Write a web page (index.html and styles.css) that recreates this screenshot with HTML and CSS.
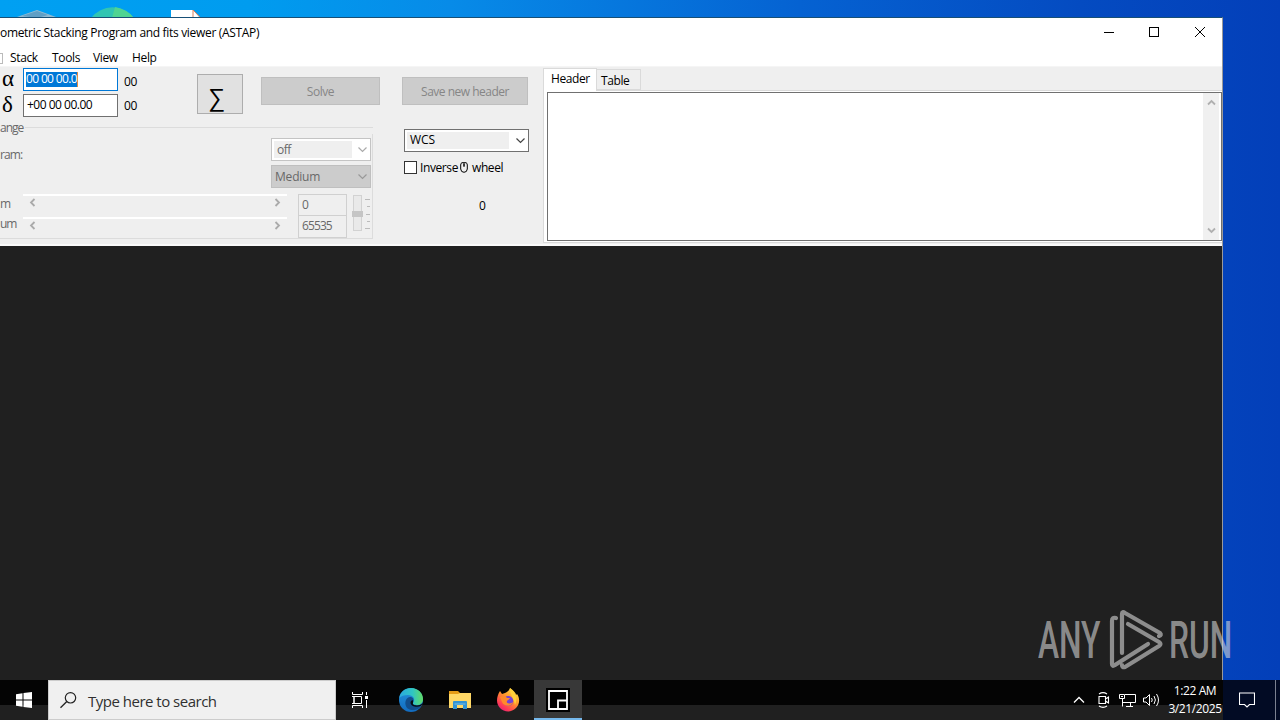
FILE: index.html
```html
<!DOCTYPE html>
<html lang="en">
<head>
    <meta charset="UTF-8">
    <meta name="viewport" content="width=device-width, initial-scale=1.0">
    <title>ASTAP</title>
    <link rel="stylesheet" href="styles.css">
</head>
<body>
    <div class="desktop">
        <!-- desktop icons peeking out above the window -->
        <svg class="desktop-icons" width="220" height="18" viewBox="0 0 220 18">
            <path d="M17 17 L37 10 L56 17 Z" fill="#8fb9d0"/>
            <path d="M22 16 L37 11 L48 15 L37 18 Z" fill="#5f9fc6"/>
            <path d="M91 18 A27 27 0 0 1 134 18 Z" fill="#31c5b2"/>
            <path d="M115 7 Q127 9 134 18 L112 18 Z" fill="#4fd492"/>
            <path d="M171 10 H193 L200 18 H171 Z" fill="#fff"/>
            <path d="M193 10 V18 M193 10 L200 17" stroke="#d9805c" fill="none"/>
        </svg>

        <div class="window">
            <div class="title-bar">
                <span class="title">ometric Stacking Program and fits viewer (ASTAP)</span>
                <div class="window-buttons">
                    <svg width="46" height="30" viewBox="0 0 46 30"><path d="M20 14.5 H30" stroke="#000"/></svg>
                    <svg width="46" height="30" viewBox="0 0 46 30"><rect x="19.5" y="9.5" width="9" height="9" fill="none" stroke="#000"/></svg>
                    <svg width="46" height="30" viewBox="0 0 46 30"><path d="M19 9 L29 19 M29 9 L19 19" stroke="#000"/></svg>
                </div>
            </div>
            <div class="menu-bar">
                <span class="menu-stub"></span>
                <span class="menu-stack">Stack</span>
                <span class="menu-tools">Tools</span>
                <span class="menu-view">View</span>
                <span class="menu-help">Help</span>
            </div>

            <div class="toolbar">
                <div class="left-panel">
                    <div class="position-row">
                        <div class="coords">
                            <span class="greek">α</span>
                            <div class="field field-focus"><span class="selected">00 00 00.0</span></div>
                            <span class="seconds">00</span>
                            <span class="greek">δ</span>
                            <div class="field"><span class="declination">+00 00 00.00</span></div>
                            <span class="seconds seconds-dec">00</span>
                        </div>
                        <div class="sigma-button">∑</div>
                        <div class="button solve"><span>Solve</span></div>
                    </div>

                    <div class="range-group">
                        <div class="legend"><span>ange</span></div>
                        <div class="histogram-row">
                            <span class="histogram-label">ram:</span>
                            <div class="selects">
                                <div class="select select-off">
                                    <span class="select-text">off</span>
                                    <svg width="11" height="7" viewBox="0 0 11 7"><path d="M1.5 1.5 L5.5 5.5 L9.5 1.5" fill="none" stroke="#aaa" stroke-width="1.2"/></svg>
                                </div>
                                <div class="select select-medium">
                                    <span class="select-text">Medium</span>
                                    <svg width="11" height="7" viewBox="0 0 11 7"><path d="M1.5 1.5 L5.5 5.5 L9.5 1.5" fill="none" stroke="#999" stroke-width="1.2"/></svg>
                                </div>
                            </div>
                        </div>
                        <div class="levels">
                            <div class="sliders">
                                <div class="slider-row">
                                    <span class="label-min">m</span>
                                    <div class="slider">
                                        <svg width="7" height="9" viewBox="0 0 7 9"><path d="M5.5 1 L2 4.5 L5.5 8" fill="none" stroke="#aaa" stroke-width="1.8"/></svg>
                                        <svg width="7" height="9" viewBox="0 0 7 9"><path d="M1.5 1 L5 4.5 L1.5 8" fill="none" stroke="#aaa" stroke-width="1.8"/></svg>
                                    </div>
                                </div>
                                <div class="slider-row">
                                    <span class="label-max">um</span>
                                    <div class="slider">
                                        <svg width="7" height="9" viewBox="0 0 7 9"><path d="M5.5 1 L2 4.5 L5.5 8" fill="none" stroke="#aaa" stroke-width="1.8"/></svg>
                                        <svg width="7" height="9" viewBox="0 0 7 9"><path d="M1.5 1 L5 4.5 L1.5 8" fill="none" stroke="#aaa" stroke-width="1.8"/></svg>
                                    </div>
                                </div>
                            </div>
                            <div class="level-values">
                                <div class="value">0</div>
                                <div class="value value-max">65535</div>
                            </div>
                            <svg class="trackbar" width="22" height="40" viewBox="0 0 22 40">
                                <rect x="2.5" y="1.5" width="8" height="35" fill="#e9e9e9" stroke="#d2d2d2"/>
                                <rect x="1" y="17" width="11" height="6" fill="#c5c5c5"/>
                                <path d="M14 5.5 H19 M16 12.5 H19 M15 20.5 H19 M16 27.5 H19 M14 34.5 H19" stroke="#bbb"/>
                            </svg>
                        </div>
                    </div>
                </div>

                <div class="middle-panel">
                    <div class="button save"><span>Save new header</span></div>
                    <div class="select select-wcs">
                        <span class="select-text">WCS</span>
                        <svg width="11" height="7" viewBox="0 0 11 7"><path d="M1.5 1.5 L5.5 5.5 L9.5 1.5" fill="none" stroke="#444" stroke-width="1.2"/></svg>
                    </div>
                    <div class="inverse">
                        <span class="checkbox"></span>
                        <span class="inverse-text">Inverse</span>
                        <svg width="8" height="11" viewBox="0 0 8 11"><path d="M2 .7 H6 Q7.3 1 7.3 3 V7 Q7 10.3 4 10.3 Q1 10.3 .7 7 V3 Q.7 1 2 .7 Z M4 1 V5 M3 3 H5" fill="none" stroke="#000"/></svg>
                        <span class="wheel-text">wheel</span>
                    </div>
                    <div class="counter">0</div>
                </div>

                <div class="notebook">
                    <div class="tabs">
                        <div class="tab tab-active"><span class="tab-header">Header</span></div>
                        <div class="tab"><span class="tab-table">Table</span></div>
                    </div>
                    <div class="page">
                        <div class="memo">
                            <div class="scrollbar">
                                <svg width="9" height="7" viewBox="0 0 9 7"><path d="M1 5.5 L4.5 2 L8 5.5" fill="none" stroke="#b0b0b0" stroke-width="1.8"/></svg>
                                <svg width="9" height="7" viewBox="0 0 9 7"><path d="M1 1.5 L4.5 5 L8 1.5" fill="none" stroke="#b0b0b0" stroke-width="1.8"/></svg>
                            </div>
                        </div>
                    </div>
                </div>
            </div>
            <div class="viewer"></div>
        </div>

        <div class="watermark">
            <span class="mark-any">ANY</span>
            <svg width="56" height="64" viewBox="0 0 56 64">
                <path d="M8 9 Q4 8 4 12 V55 Q4 58 7 56 L40 35 M14 44 V5 Q14 2 17 4 L52 24 Q54 26 51 27 M20 15 L51 33 Q54 35 51 37 L17 58 Q14 59 14 56" fill="none" stroke="currentColor" stroke-width="4.2" stroke-linejoin="round" stroke-linecap="round"/>
            </svg>
            <span class="mark-run">RUN</span>
        </div>

        <div class="taskbar">
            <div class="start">
                <svg width="16" height="16" viewBox="0 0 16 16"><path d="M0 2.2 L6.5 1.3 V7.5 H0 Z M7.5 1.1 L16 0 V7.5 H7.5 Z M0 8.5 H6.5 V14.7 L0 13.8 Z M7.5 8.5 H16 V16 L7.5 14.9 Z" fill="#fff"/></svg>
            </div>
            <div class="search">
                <svg width="18" height="18" viewBox="0 0 18 18"><circle cx="10.5" cy="6.8" r="5.2" fill="none" stroke="#222" stroke-width="1.2"/><path d="M6.8 10.5 L.5 16.8" stroke="#222" stroke-width="1.3"/></svg>
                <span>Type here to search</span>
            </div>
            <div class="apps">
                <div class="app app-taskview">
                    <svg width="18" height="16" viewBox="0 0 18 16"><path d="M1.5 0 V2.5 H11.5 V0 M3 4.5 H10.5 V11.5 H3 Z M1.5 16 V13.5 H11.5 V16 M15.5 0 V3 M15.5 8 V16" fill="none" stroke="#fff"/><path d="M1 4.5 H3 V11.5 H1" fill="none" stroke="#fff"/><rect x="14" y="4" width="3" height="3" fill="#fff"/></svg>
                </div>
                <div class="app app-edge">
                    <svg width="24" height="24" viewBox="0 0 24 24">
                        <defs>
                            <linearGradient id="edge-top" x1="0" x2="1"><stop offset="0" stop-color="#2aa8e0"/><stop offset=".55" stop-color="#2fc5c4"/><stop offset="1" stop-color="#62dc65"/></linearGradient>
                            <linearGradient id="edge-base" x1="0" y1="0" x2="0" y2="1"><stop offset="0" stop-color="#2493dd"/><stop offset="1" stop-color="#126bbf"/></linearGradient>
                        </defs>
                        <circle cx="12" cy="12" r="12" fill="url(#edge-base)"/>
                        <path d="M.2 10 C1 4 6 0 12 0 C19 0 24 5 24 11 C24 15 21 17 18 17 C15 17 13.5 16 14 15 C17 11 14 7 9 7 C5 7 2 8 .2 10 Z" fill="url(#edge-top)"/>
                        <path d="M8 20 C4 14 8 8 12 9 C15 10 15 13 13.8 15 C14 18 19 19 23 16 C22 18 21 20 19 21 C15 23 10 22 8 20 Z" fill="#124e8c"/>
                        <path d="M14 15 C13 17 17 18 21 17 L24 15 L22 18 C17 20 12 18 11.5 15 C11.5 13 13 12 14 12.5 Z" fill="#080d12"/>
                    </svg>
                </div>
                <div class="app app-explorer">
                    <svg width="22" height="20" viewBox="0 0 22 20">
                        <path d="M0 1 H9 L11 3 H21 V7 H0 Z" fill="#e59c17"/>
                        <path d="M0 4 H9 L11 3 H22 V18 H0 Z" fill="#ffd866"/>
                        <path d="M4 19 V12 Q4 11 5 11 H17 Q18 11 18 12 V19 H14 V15 H8 V19 Z" fill="#3294d4"/>
                        <path d="M5.5 14 H16.5" stroke="#79bde3"/>
                    </svg>
                </div>
                <div class="app app-firefox">
                    <svg width="24" height="24" viewBox="0 0 24 24">
                        <defs><linearGradient id="fox" x1=".9" y1="0" x2=".2" y2="1"><stop offset="0" stop-color="#fff04a"/><stop offset=".45" stop-color="#ff982b"/><stop offset=".8" stop-color="#ff3d55"/><stop offset="1" stop-color="#e41b79"/></linearGradient></defs>
                        <path d="M4 3 L6 6 L9 5 C11 4 13 3 14 0 C18 3 20 5 20 7 L21 6 C24 10 24 16 20 20 C15 25 8 24 4 20 C0 16 0 9 4 3 Z" fill="url(#fox)"/>
                        <circle cx="12.3" cy="13" r="5" fill="#7442d5"/>
                        <path d="M4 9 C7 7 10 8 11 10 L14 10 C13 12 11 12 11 13 C10 15 13 17 17 14 C16 19 8 19 6 14 Z" fill="#ff8a2b"/>
                        <path d="M14 0 C20 5 22 10 19 17 C18 10 14 7 14 0 Z" fill="#ffcf3a"/>
                    </svg>
                </div>
                <div class="app app-active">
                    <svg width="24" height="24" viewBox="0 0 24 24"><rect width="24" height="24" fill="#000"/><path d="M3 3 H21 V21 H3 Z M12 21 V12.5 H21" fill="none" stroke="#fff" stroke-width="1.8"/></svg>
                </div>
            </div>
            <div class="tray">
                <svg class="tray-chevron" width="12" height="8" viewBox="0 0 12 8"><path d="M1 6.5 L6 1.5 L11 6.5" fill="none" stroke="#fff" stroke-width="1.3"/></svg>
                <svg class="tray-meet" width="13" height="16" viewBox="0 0 13 16"><path d="M2 2 Q6 -.7 10 2 M2 14 Q6 16.7 10 14 M2 4.5 H8.5 V11.5 H2 Z M8.5 7 L11.5 5 V11 L8.5 9" fill="none" stroke="#fff" stroke-width="1.1"/></svg>
                <svg class="tray-network" width="17" height="14" viewBox="0 0 17 14"><path d="M6 1.5 H16.5 V9.5 H4 M11.5 10 V13 M7 13.5 H14 M3.5 5 V13.5 M.5 1.5 H5.5 V5.5 H.5 Z" fill="none" stroke="#fff"/><path d="M2 3.5 H4" stroke="#fff"/></svg>
                <svg class="tray-volume" width="17" height="14" viewBox="0 0 17 14"><path d="M.5 5 H3 L6.5 1.5 V12.5 L3 9 H.5 Z M8.5 5 Q10 7 8.5 9 M11 3 Q13.8 7 11 11 M13.5 1 Q17.5 7 13.5 13" fill="none" stroke="#fff"/></svg>
                <div class="clock"><span class="time">1:22 AM</span><span class="date">3/21/2025</span></div>
                <div class="notifications">
                    <svg width="16" height="16" viewBox="0 0 16 16"><path d="M.5 1 H15.5 V12.5 H10.5 L8 15 L5.5 12.5 H.5 Z" fill="none" stroke="#fff" stroke-width="1.1"/></svg>
                </div>
            </div>
        </div>
    </div>
</body>
</html>
```
FILE: styles.css
```css
* {
    box-sizing: border-box;
}

body {
    margin: 0;
    font-family: "Open Sans", "Noto Sans", sans-serif;
    font-size: 12px;
    line-height: 14px;
    letter-spacing: -.45px;
    color: #000;
}

svg {
    display: block;
    flex: none;
}

span {
    white-space: nowrap;
}

.desktop {
    position: relative;
    width: 1280px;
    height: 720px;
    overflow: hidden;
    background: linear-gradient(90deg, #00a0f2 0, #009cef 250px, #078be8 450px, #0562d2 800px, #044bc1 1080px, #033fb9 1280px);
}

.desktop-icons {
    position: absolute;
    left: 0;
    top: 0;
}

/* Application window */
.window {
    position: absolute;
    left: 0;
    top: 17px;
    width: 1223px;
    height: 703px;
    display: flex;
    flex-direction: column;
    border-top: 1px solid #174f76;
    border-right: 1px solid #999;
    background: #efefef;
    overflow: hidden;
}

.title-bar {
    display: flex;
    justify-content: space-between;
    height: 30px;
    background: #fff;
}

.title {
    padding-top: 8px;
    letter-spacing: -.32px;
}

.window-buttons {
    display: flex;
}

.menu-bar {
    display: flex;
    align-items: flex-start;
    height: 18px;
    padding-top: 3px;
    background: #fff;
    letter-spacing: -.35px;
}

.menu-bar span {
    flex: none;
}

.menu-stub {
    width: 3px;
    height: 11px;
    margin-top: 2px;
    border: 1px solid #bbb;
    border-left: 0;
}

.menu-bar .menu-stack {
    width: 42px;
    margin-left: 7px;
}

.menu-tools {
    width: 41px;
}

.menu-view {
    width: 39px;
}

/* Toolbar */
.toolbar {
    display: flex;
    height: 180px;
    border-top: 1px solid #f5f5f5;
    border-bottom: 2px solid #fafafa;
}

.left-panel {
    width: 390px;
    flex: none;
}

.position-row {
    display: flex;
    align-items: flex-start;
    height: 54px;
}

.coords {
    display: grid;
    grid-template-columns: 23px 95px 1fr;
    grid-template-rows: 23px 23px;
    row-gap: 3px;
    width: 197px;
    padding-top: 1px;
}

.greek {
    padding-left: 2px;
    font-family: "Liberation Serif", serif;
    font-size: 23px;
    line-height: 21px;
}

.field {
    display: flex;
    align-items: flex-start;
    padding: 3px 2px;
    border: 1px solid #707070;
    background: #fff;
    letter-spacing: -.65px;
}

.field-focus {
    border-color: #0078d7;
}

.selected {
    height: 15px;
    background: #0078d7;
    border-right: 1px solid #e58b3d;
    color: #fff;
}

.declination {
    padding-left: 1px;
    letter-spacing: -.5px;
}

.seconds {
    padding: 7px 0 0 6px;
}

.seconds-dec {
    padding-top: 5px;
}

.sigma-button {
    width: 46px;
    height: 40px;
    margin-top: 7px;
    padding-left: 11px;
    border: 1px solid #adadad;
    background: #e1e1e1;
    font-size: 24px;
    line-height: 43px;
}

.button {
    display: flex;
    justify-content: center;
    align-items: center;
    height: 28px;
    padding-top: 1px;
    border: 1px solid #bfbfbf;
    background: #ccc;
    color: #868686;
    letter-spacing: -.45px;
}

.solve {
    width: 119px;
    margin: 10px 0 0 18px;
}

.range-group {
    width: 373px;
    height: 118px;
    border-right: 1px solid #dcdcdc;
    border-bottom: 1px solid #dcdcdc;
    background: #efefef;
    color: #686868;
}

.legend {
    display: flex;
    align-items: center;
    width: 373px;
    height: 13px;
    gap: 2px;
    background: #efefef;
    letter-spacing: -1px;
}

.legend span {
    padding-top: 1px;
}

.legend::after {
    content: "";
    flex: 1;
    height: 1px;
    background: #dcdcdc;
}

.histogram-row {
    display: flex;
    justify-content: space-between;
    height: 60px;
    padding: 4px 1px 0 0;
}

.histogram-label {
    padding-top: 10px;
    letter-spacing: -.9px;
}

.selects {
    display: grid;
    gap: 4px;
    align-content: start;
}

.select {
    display: flex;
    align-items: center;
    justify-content: space-between;
    height: 23px;
    padding: 0 2px;
    border: 1px solid #c4c4c4;
    background: #fff;
}

.select .select-text {
    width: 78px;
    height: 17px;
    padding: 1px 0 0 3px;
    background: #efefef;
}

.select-off {
    width: 100px;
}

.select-off .select-text {
    padding-top: 2px;
}

.select-medium {
    background: #ccc;
    padding-left: 0;
    border-color: #bfbfbf;
    letter-spacing: -.2px;
}

.select-medium .select-text {
    background: none;
    padding-top: 2px;
}

.levels {
    display: flex;
    height: 44px;
}

.sliders {
    width: 298px;
    flex: none;
}

.slider-row {
    display: flex;
    height: 23px;
}

.label-min,
.label-max {
    width: 23px;
    flex: none;
    padding-top: 3px;
}

.label-max {
    padding-top: 0;
    letter-spacing: -1.2px;
}

.slider {
    display: flex;
    align-items: flex-start;
    justify-content: space-between;
    width: 264px;
    height: 22px;
    padding: 2px 6px;
    border-top: 2px solid #fff;
}

.level-values {
    width: 49px;
    flex: none;
}

.value {
    height: 22px;
    padding: 3px;
    border: 1px solid #d0d0d0;
    letter-spacing: -.9px;
}

.value-max {
    border-top: 0;
}

.trackbar {
    margin-left: 4px;
}

.middle-panel {
    width: 153px;
    flex: none;
    padding: 10px 0 0 12px;
}

.save {
    width: 126px;
    letter-spacing: -.5px;
}

.select-wcs {
    width: 125px;
    margin: 24px 0 0 2px;
    border-color: #707070;
    letter-spacing: -.1px;
}

.select-wcs .select-text {
    width: 102px;
}

.inverse {
    display: flex;
    align-items: center;
    margin: 7px 0 0 2px;
    letter-spacing: -.4px;
}

.inverse-text,
.wheel-text {
    padding-top: 2px;
}

.checkbox {
    width: 13px;
    height: 13px;
    margin-right: 3px;
    border: 1px solid #333;
    background: #fff;
}

.inverse-text {
    width: 40px;
}

.wheel-text {
    margin-left: 4px;
}

.counter {
    margin: 24px 0 0 77px;
}

/* Header / Table pages */
.notebook {
    flex: 1;
}

.tabs {
    display: flex;
    height: 23px;
    padding-top: 1px;
    letter-spacing: -.4px;
}

.tab {
    height: 21px;
    width: 44px;
    margin-top: 1px;
    padding: 4px 0 0 4px;
    border: 1px solid #dadada;
    border-left: 0;
}

.tab-active {
    height: 23px;
    width: 54px;
    margin-top: 0;
    padding: 3px 0 0 7px;
    background: #fff;
    border-left: 1px solid #dadada;
    border-bottom: 0;
}

.page {
    height: 153px;
    padding: 1px 0 3px 3px;
    border-left: 1px solid #dadada;
    border-top: 1px solid #dadada;
    border-bottom: 1px solid #dadada;
    background: #fff;
}

.memo {
    display: flex;
    justify-content: flex-end;
    height: 149px;
    padding-right: 2px;
    border: 1px solid #707070;
}

.scrollbar {
    display: flex;
    flex-direction: column;
    align-items: center;
    justify-content: space-between;
    width: 16px;
    padding: 6px 0;
    background: #f0f0f0;
}

.viewer {
    flex: 1;
    background: #202020;
}

/* Watermark over the lower right corner */
.watermark {
    position: absolute;
    left: 1038px;
    top: 608px;
    display: flex;
    align-items: center;
    color: rgba(220, 220, 220, .58);
    letter-spacing: 0;
}

.mark-any,
.mark-run {
    font-family: Roboto, sans-serif;
    font-size: 52px;
    font-weight: 500;
    line-height: 66px;
    transform: scaleX(.61);
    transform-origin: left center;
}

.mark-any {
    width: 70px;
}

.mark-run {
    margin-left: 5px;
    width: 61px;
}

/* Taskbar */
.taskbar {
    position: absolute;
    left: 0;
    bottom: 0;
    display: flex;
    width: 1280px;
    height: 40px;
    background: linear-gradient(#040404 0 25px, #202020 25px);
}

.start {
    display: flex;
    align-items: center;
    justify-content: center;
    width: 48px;
}

.search {
    display: flex;
    align-items: center;
    gap: 10px;
    width: 288px;
    padding-left: 11px;
    border: 1px solid #ccc;
    background: #f0f0f0;
    color: #303030;
    font-size: 15px;
    line-height: 20px;
    letter-spacing: -.5px;
}

.search span {
    padding-top: 1px;
}

.apps {
    display: flex;
}

.app {
    display: flex;
    align-items: center;
    justify-content: center;
}

.app-taskview {
    width: 48px;
}

.app-edge {
    width: 53px;
}

.app-explorer {
    width: 45px;
}

.app-firefox {
    width: 52px;
}

.app-active {
    width: 48px;
    background: #383838;
    border-bottom: 2px solid #76b9ed;
    padding-top: 2px;
}

.tray {
    display: flex;
    align-items: center;
    margin-left: auto;
    color: #fff;
}

.tray-meet {
    margin-left: 12px;
}

.tray-network {
    margin-left: 9px;
}

.tray-volume {
    margin-left: 7px;
}

.clock {
    display: flex;
    flex-direction: column;
    align-items: center;
    width: 56px;
    margin-left: 7px;
    font-size: 12px;
    line-height: 18px;
    letter-spacing: -.4px;
}

.notifications {
    display: flex;
    align-items: center;
    width: 57px;
    height: 40px;
    padding-left: 16px;
    background: linear-gradient(90deg, #020b24 52px, #7b8190 52px 53px, #020b24 53px);
}
```
